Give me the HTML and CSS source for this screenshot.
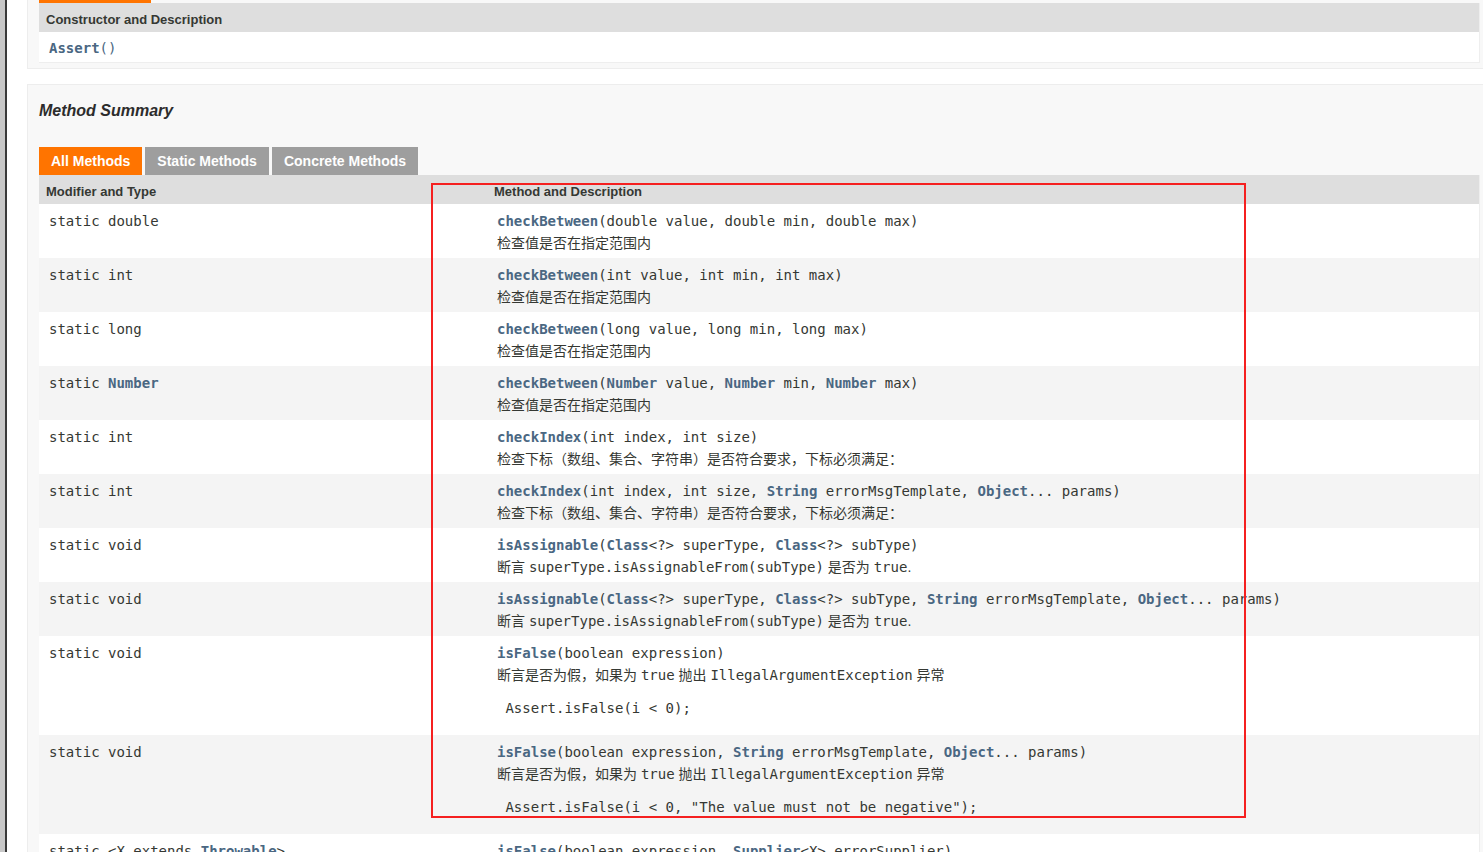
FILE: index.html
```html
<!DOCTYPE html>
<html lang="zh">
<head>
<meta charset="utf-8">
<title>Assert</title>
<link rel="stylesheet" href="styles.css">
</head>
<body>
<div class="page">
  <div class="rail"></div>
  <div class="content">
    <section class="block block-ctor">
      <h3 class="block-title">Constructor Summary</h3>
      <div class="tabs"><span class="tab active">Constructors</span></div>
      <table class="summary">
        <thead><tr><th>Constructor and Description</th></tr></thead>
        <tbody>
          <tr class="odd"><td class="ctor"><code><a class="name">Assert</a><span class="lnk">()</span></code></td></tr>
        </tbody>
      </table>
    </section>

    <section class="block block-method">
      <h3 class="block-title">Method Summary</h3>
      <div class="tabs">
        <span class="tab active">All Methods</span>
        <span class="tab">Static Methods</span>
        <span class="tab">Concrete Methods</span>
      </div>
      <table class="summary methods">
        <colgroup><col class="c1"><col class="c2"></colgroup>
        <thead><tr><th>Modifier and Type</th><th>Method and Description</th></tr></thead>
        <tbody>
          <tr class="odd">
            <td class="type"><code>static double</code></td>
            <td class="desc"><code><a class="name">checkBetween</a>(double&nbsp;value, double&nbsp;min, double&nbsp;max)</code>
              <div class="txt">检查值是否在指定范围内</div></td>
          </tr>
          <tr class="even">
            <td class="type"><code>static int</code></td>
            <td class="desc"><code><a class="name">checkBetween</a>(int&nbsp;value, int&nbsp;min, int&nbsp;max)</code>
              <div class="txt">检查值是否在指定范围内</div></td>
          </tr>
          <tr class="odd">
            <td class="type"><code>static long</code></td>
            <td class="desc"><code><a class="name">checkBetween</a>(long&nbsp;value, long&nbsp;min, long&nbsp;max)</code>
              <div class="txt">检查值是否在指定范围内</div></td>
          </tr>
          <tr class="even">
            <td class="type"><code>static <a class="name">Number</a></code></td>
            <td class="desc"><code><a class="name">checkBetween</a>(<a class="name">Number</a>&nbsp;value, <a class="name">Number</a>&nbsp;min, <a class="name">Number</a>&nbsp;max)</code>
              <div class="txt">检查值是否在指定范围内</div></td>
          </tr>
          <tr class="odd">
            <td class="type"><code>static int</code></td>
            <td class="desc"><code><a class="name">checkIndex</a>(int&nbsp;index, int&nbsp;size)</code>
              <div class="txt">检查下标（数组、集合、字符串）是否符合要求，下标必须满足：</div></td>
          </tr>
          <tr class="even">
            <td class="type"><code>static int</code></td>
            <td class="desc"><code><a class="name">checkIndex</a>(int&nbsp;index, int&nbsp;size, <a class="name">String</a>&nbsp;errorMsgTemplate, <a class="name">Object</a>...&nbsp;params)</code>
              <div class="txt">检查下标（数组、集合、字符串）是否符合要求，下标必须满足：</div></td>
          </tr>
          <tr class="odd">
            <td class="type"><code>static void</code></td>
            <td class="desc"><code><a class="name">isAssignable</a>(<a class="name">Class</a>&lt;?&gt;&nbsp;superType, <a class="name">Class</a>&lt;?&gt;&nbsp;subType)</code>
              <div class="txt">断言 <code>superType.isAssignableFrom(subType)</code> 是否为 <code>true</code>.</div></td>
          </tr>
          <tr class="even">
            <td class="type"><code>static void</code></td>
            <td class="desc"><code class="nowrap"><a class="name">isAssignable</a>(<a class="name">Class</a>&lt;?&gt;&nbsp;superType, <a class="name">Class</a>&lt;?&gt;&nbsp;subType, <a class="name">String</a>&nbsp;errorMsgTemplate, <a class="name">Object</a>...&nbsp;params)</code>
              <div class="txt">断言 <code>superType.isAssignableFrom(subType)</code> 是否为 <code>true</code>.</div></td>
          </tr>
          <tr class="odd">
            <td class="type"><code>static void</code></td>
            <td class="desc"><code><a class="name">isFalse</a>(boolean&nbsp;expression)</code>
              <div class="txt">断言是否为假，如果为 <code>true</code> 抛出 <code>IllegalArgumentException</code> 异常</div>
              <pre class="sample"> Assert.isFalse(i &lt; 0);</pre></td>
          </tr>
          <tr class="even">
            <td class="type"><code>static void</code></td>
            <td class="desc"><code><a class="name">isFalse</a>(boolean&nbsp;expression, <a class="name">String</a>&nbsp;errorMsgTemplate, <a class="name">Object</a>...&nbsp;params)</code>
              <div class="txt">断言是否为假，如果为 <code>true</code> 抛出 <code>IllegalArgumentException</code> 异常</div>
              <pre class="sample"> Assert.isFalse(i &lt; 0, "The value must not be negative");</pre></td>
          </tr>
          <tr class="odd">
            <td class="type"><code>static &lt;X extends <a class="name">Throwable</a>&gt;<br>void</code></td>
            <td class="desc"><code><a class="name">isFalse</a>(boolean&nbsp;expression, <a class="name">Supplier</a>&lt;X&gt;&nbsp;errorSupplier)</code>
              <div class="txt">断言是否为假，如果为 <code>true</code> 抛出指定类型异常</div></td>
          </tr>
        </tbody>
      </table>
    </section>
  </div>
  <div class="highlight"></div>
</div>
</body>
</html>
```

FILE: styles.css
```css
html, body {
  margin: 0;
  padding: 0;
  background: #ffffff;
}

body {
  overflow: hidden;
  height: 852px;
  font-family: "Liberation Sans", Arial, "Noto Sans CJK SC", sans-serif;
  color: #353833;
}

.page {
  position: relative;
  display: flex;
  height: 852px;
  overflow: hidden;
}

.rail {
  flex: 0 0 5px;
  background: #c8c8c8;
  border-right: 2px solid #3a3a3a;
}

.content {
  flex: 1 1 auto;
  min-width: 0;
  padding-left: 20px;
}

.block {
  background: #f8f8f8;
  border: 1px solid #ededed;
  padding: 0 11px 5px 11px;
  margin-right: -9px;
}

.block-ctor {
  margin-top: -88px;
  margin-bottom: 15px;
}

.block-title {
  margin: 16px 0 26px 0;
  font-size: 16px;
  line-height: 20px;
  font-style: italic;
  font-weight: bold;
  color: #2c2c2c;
}

.tabs {
  display: flex;
  gap: 3px;
}

.tab {
  display: block;
  height: 28px;
  line-height: 28px;
  padding: 0 12px;
  background: #9e9e9e;
  color: #ffffff;
  font-size: 14px;
  font-weight: bold;
  white-space: nowrap;
}

.tab.active {
  background: #ff7400;
}

.summary {
  width: 100%;
  border-collapse: collapse;
  table-layout: fixed;
  border-right: 1px solid #eeeeee;
  border-bottom: 1px solid #eeeeee;
}

.methods .c1 {
  width: 448px;
}

.summary th {
  background: #dedede;
  text-align: left;
  font-size: 13px;
  font-weight: bold;
  line-height: 18px;
  padding: 8px 3px 3px 7px;
  color: #353833;
}

.summary td {
  vertical-align: top;
  padding: 6px 3px 4px 10px;
  font-size: 14px;
  line-height: 22px;
}

.summary td.ctor {
  padding: 5px 3px 3px 10px;
}

tr.odd td {
  background: #ffffff;
}

tr.even td {
  background: #f4f4f4;
}

code, pre {
  font-family: "DejaVu Sans Mono", "Liberation Mono", monospace;
  font-size: 14px;
  color: #353833;
}

.name {
  color: #4a6782;
  font-weight: bold;
  text-decoration: none;
}

.lnk {
  color: #4a6782;
}

.nowrap {
  white-space: nowrap;
}

.txt {
  font-family: "Liberation Sans", Arial, "Noto Sans CJK SC", sans-serif;
  font-size: 14px;
  line-height: 22px;
  color: #353833;
  white-space: nowrap;
}

.sample {
  margin: 11px 0 12px 0;
  line-height: 22px;
  white-space: pre;
}

.highlight {
  position: absolute;
  left: 431px;
  top: 183px;
  width: 815px;
  height: 635px;
  box-sizing: border-box;
  border: 2px solid #f52020;
  pointer-events: none;
}
```
